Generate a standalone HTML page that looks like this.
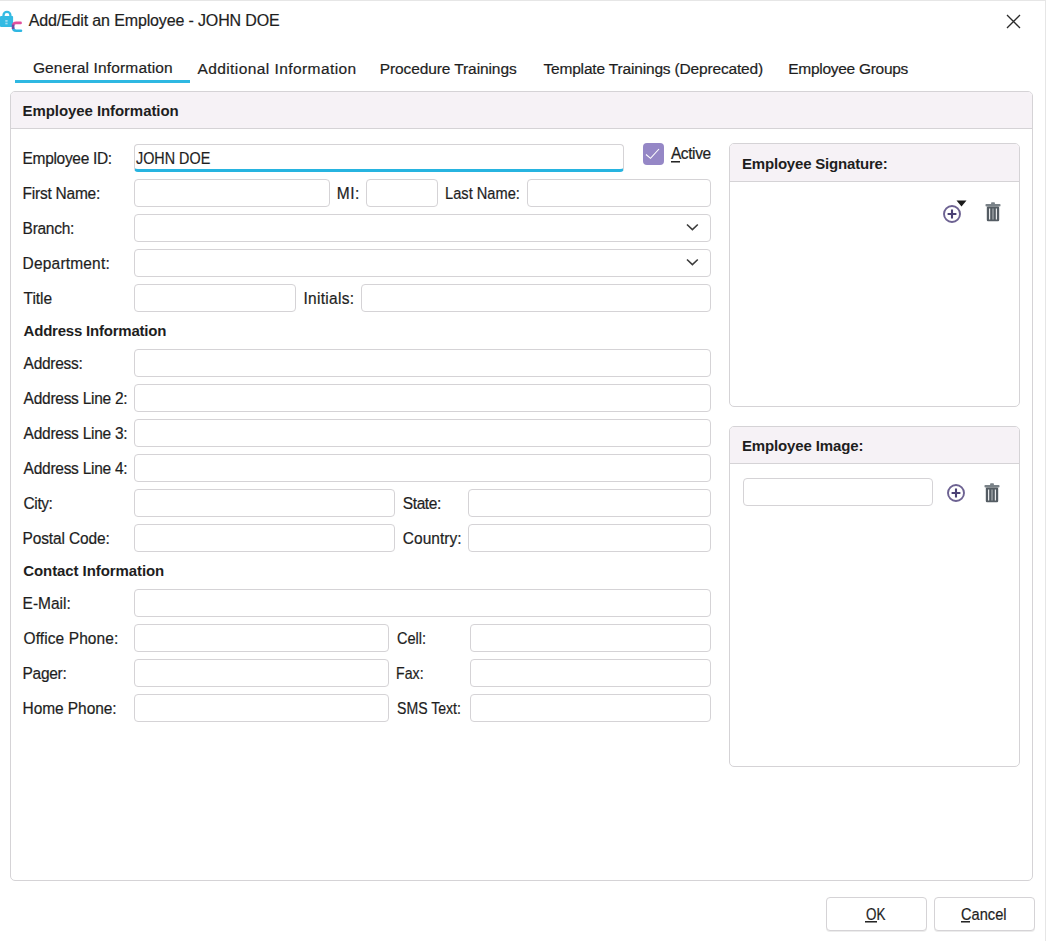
<!DOCTYPE html><html><head><meta charset="utf-8"><style>
html,body{margin:0;padding:0;background:#fff;}
body{width:1046px;height:941px;position:relative;overflow:hidden;font-family:"Liberation Sans",sans-serif;}
.t{position:absolute;white-space:pre;line-height:20px;height:20px;}
.b{position:absolute;box-sizing:border-box;border:1px solid #d5d3d6;border-radius:4px;background:#fff;}
.g{position:absolute;box-sizing:border-box;border:1px solid #d5d3d6;border-radius:5px;background:#fff;overflow:hidden;}
.gh{position:absolute;left:0;top:0;right:0;background:#f6f2f6;border-bottom:1px solid #d5d3d6;}
</style></head><body>
<div style="position:absolute;left:0;top:0;width:1046px;height:1px;background:#e6e6e6"></div>
<div style="position:absolute;left:1045px;top:0;width:1px;height:941px;background:#e6e6e6"></div>
<div class="g" style="left:10px;top:91px;width:1023px;height:790px"><div class="gh" style="height:36px"></div></div>
<div class="g" style="left:729px;top:143px;width:291px;height:264px"><div class="gh" style="height:37px"></div></div>
<div class="g" style="left:729px;top:426px;width:291px;height:341px"><div class="gh" style="height:36px"></div></div>
<div style="position:absolute;left:15px;top:80px;width:175px;height:3px;background:#2fb8e2"></div>
<div class="b" style="left:134px;top:144px;width:490px;height:28px;border-bottom:3px solid #27b4e0"></div>
<div class="b" style="left:134px;top:179px;width:196px;height:28px"></div>
<div class="b" style="left:366px;top:179px;width:72px;height:28px"></div>
<div class="b" style="left:527px;top:179px;width:184px;height:28px"></div>
<div class="b" style="left:134px;top:214px;width:577px;height:28px"></div>
<div class="b" style="left:134px;top:249px;width:577px;height:28px"></div>
<div class="b" style="left:134px;top:284px;width:162px;height:28px"></div>
<div class="b" style="left:361px;top:284px;width:350px;height:28px"></div>
<div class="b" style="left:134px;top:349px;width:577px;height:28px"></div>
<div class="b" style="left:134px;top:384px;width:577px;height:28px"></div>
<div class="b" style="left:134px;top:419px;width:577px;height:28px"></div>
<div class="b" style="left:134px;top:454px;width:577px;height:28px"></div>
<div class="b" style="left:134px;top:489px;width:261px;height:28px"></div>
<div class="b" style="left:468px;top:489px;width:243px;height:28px"></div>
<div class="b" style="left:134px;top:524px;width:261px;height:28px"></div>
<div class="b" style="left:468px;top:524px;width:243px;height:28px"></div>
<div class="b" style="left:134px;top:589px;width:577px;height:28px"></div>
<div class="b" style="left:134px;top:624px;width:255px;height:28px"></div>
<div class="b" style="left:470px;top:624px;width:241px;height:28px"></div>
<div class="b" style="left:134px;top:659px;width:255px;height:28px"></div>
<div class="b" style="left:470px;top:659px;width:241px;height:28px"></div>
<div class="b" style="left:134px;top:694px;width:255px;height:28px"></div>
<div class="b" style="left:470px;top:694px;width:241px;height:28px"></div>
<div class="b" style="left:743px;top:478px;width:190px;height:28px"></div>
<div class="b" style="left:826px;top:897px;width:101px;height:34px;border-radius:4px;box-shadow:0 1px 0 #ececec"></div>
<div class="b" style="left:934px;top:897px;width:101px;height:34px;border-radius:4px;box-shadow:0 1px 0 #ececec"></div>
<div style="position:absolute;left:642.5px;top:143px;width:21.5px;height:21.5px;border-radius:4px;background:#9587c6"></div>
<svg style="position:absolute;left:642px;top:143px" width="22" height="22"><path d="M4 11.5 L8.5 15.3 L17 6" fill="none" stroke="#fff" stroke-width="1.1"/></svg>
<svg style="position:absolute;left:684px;top:222px" width="16" height="10"><path d="M3 2.5 L8.4 7.6 L13.8 2.5" fill="none" stroke="#3c3c3c" stroke-width="1.6"/></svg>
<svg style="position:absolute;left:684px;top:257px" width="16" height="10"><path d="M3 2.5 L8.4 7.6 L13.8 2.5" fill="none" stroke="#3c3c3c" stroke-width="1.6"/></svg>
<svg style="position:absolute;left:1004px;top:12px" width="20" height="20"><path d="M3 3 L16 16 M16 3 L3 16" fill="none" stroke="#2b2b2b" stroke-width="1.3"/></svg>
<svg style="position:absolute;left:940.6px;top:202.6px" width="22" height="22" viewBox="0 0 22 22"><circle cx="11" cy="11" r="8.0" fill="none" stroke="#6d6292" stroke-width="1.9"/><path d="M11 6.6 V15.4 M6.6 11 H15.4" stroke="#4b4175" stroke-width="2.1"/></svg>
<svg style="position:absolute;left:956px;top:199.6px" width="11" height="7"><path d="M0.5 0.5 H10.5 L5.5 6.5 Z" fill="#1a1a1a"/></svg>
<svg style="position:absolute;left:985px;top:202px" width="16" height="20" viewBox="0 0 16 20"><rect x="0.5" y="2" width="15" height="2.6" rx="0.8" fill="#7a8288"/><rect x="6" y="0.3" width="4" height="2" rx="1" fill="#7a8288"/><rect x="1.8" y="4.6" width="12.4" height="14.6" rx="1.2" fill="#545c63"/><rect x="4" y="6.5" width="1.2" height="11" fill="#e8eaec"/><rect x="7.4" y="6.5" width="1.2" height="11" fill="#a9aeb2"/><rect x="10.8" y="6.5" width="1.2" height="11" fill="#e8eaec"/></svg>
<svg style="position:absolute;left:944.7px;top:481.8px" width="22" height="22" viewBox="0 0 22 22"><circle cx="11" cy="11" r="8.0" fill="none" stroke="#6d6292" stroke-width="1.9"/><path d="M11 6.6 V15.4 M6.6 11 H15.4" stroke="#4b4175" stroke-width="2.1"/></svg>
<svg style="position:absolute;left:984px;top:483px" width="16" height="20" viewBox="0 0 16 20"><rect x="0.5" y="2" width="15" height="2.6" rx="0.8" fill="#7a8288"/><rect x="6" y="0.3" width="4" height="2" rx="1" fill="#7a8288"/><rect x="1.8" y="4.6" width="12.4" height="14.6" rx="1.2" fill="#545c63"/><rect x="4" y="6.5" width="1.2" height="11" fill="#e8eaec"/><rect x="7.4" y="6.5" width="1.2" height="11" fill="#a9aeb2"/><rect x="10.8" y="6.5" width="1.2" height="11" fill="#e8eaec"/></svg>
<svg style="position:absolute;left:0px;top:0px" width="26" height="36" viewBox="0 0 26 36"><path d="M3.5 16.5 V15.3 A3.45 3.45 0 0 1 10.4 15.3 V16.5" fill="none" stroke="#34bbe3" stroke-width="2.3"/><rect x="0" y="15.9" width="13.1" height="11.1" rx="1" fill="#34bbe3"/><rect x="5.3" y="20" width="2.3" height="1.8" fill="#9fdcf1"/><rect x="5.3" y="22.7" width="2.3" height="1.6" fill="#9fdcf1"/><path d="M20.6 22.9 H16.2 Q13.1 22.9 13.1 25.6" fill="none" stroke="#e0509c" stroke-width="2.6" stroke-linecap="round"/><path d="M13.1 27.8 Q13.1 30.7 16.2 30.7 H21" fill="none" stroke="#2fb7e2" stroke-width="2.6" stroke-linecap="round"/><path d="M13.1 24.6 V29" fill="none" stroke="#6a4fa6" stroke-width="2.6"/></svg>
<div class="t" style="left:28.70px;top:11px;font-size:16px;font-weight:400;color:#1e1e1e;letter-spacing:-0.141px;-webkit-text-stroke:0.2px #1e1e1e;">Add/Edit an Employee - JOHN DOE</div>
<div class="t" style="left:32.90px;top:58px;font-size:15.5px;font-weight:400;color:#1e1e1e;letter-spacing:0.152px;-webkit-text-stroke:0.2px #1e1e1e;">General Information</div>
<div class="t" style="left:197.40px;top:59px;font-size:15.5px;font-weight:400;color:#1e1e1e;letter-spacing:0.424px;-webkit-text-stroke:0.2px #1e1e1e;">Additional Information</div>
<div class="t" style="left:379.70px;top:59px;font-size:15.5px;font-weight:400;color:#1e1e1e;letter-spacing:-0.097px;-webkit-text-stroke:0.2px #1e1e1e;">Procedure Trainings</div>
<div class="t" style="left:543.40px;top:59px;font-size:15.5px;font-weight:400;color:#1e1e1e;letter-spacing:-0.169px;-webkit-text-stroke:0.2px #1e1e1e;">Template Trainings (Deprecated)</div>
<div class="t" style="left:788.30px;top:59px;font-size:15.5px;font-weight:400;color:#1e1e1e;letter-spacing:-0.286px;-webkit-text-stroke:0.2px #1e1e1e;">Employee Groups</div>
<div class="t" style="left:22.60px;top:101px;font-size:15px;font-weight:700;color:#1e1e1e;letter-spacing:-0.077px;">Employee Information</div>
<div class="t" style="left:23.60px;top:321px;font-size:15px;font-weight:700;color:#1e1e1e;letter-spacing:-0.218px;">Address Information</div>
<div class="t" style="left:23.30px;top:561px;font-size:15px;font-weight:700;color:#1e1e1e;letter-spacing:-0.085px;">Contact Information</div>
<div class="t" style="left:742.00px;top:154px;font-size:15px;font-weight:700;color:#1e1e1e;letter-spacing:-0.195px;">Employee Signature:</div>
<div class="t" style="left:742.00px;top:436px;font-size:15px;font-weight:700;color:#1e1e1e;letter-spacing:-0.142px;">Employee Image:</div>
<div class="t" style="left:22.60px;top:148px;font-size:15.5px;font-weight:400;color:#1e1e1e;letter-spacing:-0.321px;-webkit-text-stroke:0.2px #1e1e1e;transform:scale(1.0000,1.100);transform-origin:1.00px 5px;">Employee ID:</div>
<div class="t" style="left:22.60px;top:183px;font-size:15.5px;font-weight:400;color:#1e1e1e;letter-spacing:-0.238px;-webkit-text-stroke:0.2px #1e1e1e;transform:scale(1.0000,1.100);transform-origin:1.00px 5px;">First Name:</div>
<div class="t" style="left:22.60px;top:218px;font-size:15.5px;font-weight:400;color:#1e1e1e;letter-spacing:-0.285px;-webkit-text-stroke:0.2px #1e1e1e;transform:scale(1.0000,1.100);transform-origin:1.00px 5px;">Branch:</div>
<div class="t" style="left:22.60px;top:253px;font-size:15.5px;font-weight:400;color:#1e1e1e;letter-spacing:0.182px;-webkit-text-stroke:0.2px #1e1e1e;transform:scale(1.0000,1.100);transform-origin:1.00px 5px;">Department:</div>
<div class="t" style="left:23.60px;top:288px;font-size:15.5px;font-weight:400;color:#1e1e1e;letter-spacing:-0.072px;-webkit-text-stroke:0.2px #1e1e1e;transform:scale(1.0000,1.100);transform-origin:0.00px 5px;">Title</div>
<div class="t" style="left:23.60px;top:353px;font-size:15.5px;font-weight:400;color:#1e1e1e;letter-spacing:-0.266px;-webkit-text-stroke:0.2px #1e1e1e;transform:scale(1.0000,1.100);transform-origin:0.00px 5px;">Address:</div>
<div class="t" style="left:23.60px;top:388px;font-size:15.5px;font-weight:400;color:#1e1e1e;letter-spacing:-0.264px;-webkit-text-stroke:0.2px #1e1e1e;transform:scale(1.0000,1.100);transform-origin:0.00px 5px;">Address Line 2:</div>
<div class="t" style="left:23.60px;top:423px;font-size:15.5px;font-weight:400;color:#1e1e1e;letter-spacing:-0.264px;-webkit-text-stroke:0.2px #1e1e1e;transform:scale(1.0000,1.100);transform-origin:0.00px 5px;">Address Line 3:</div>
<div class="t" style="left:23.60px;top:458px;font-size:15.5px;font-weight:400;color:#1e1e1e;letter-spacing:-0.264px;-webkit-text-stroke:0.2px #1e1e1e;transform:scale(1.0000,1.100);transform-origin:0.00px 5px;">Address Line 4:</div>
<div class="t" style="left:23.60px;top:493px;font-size:15.5px;font-weight:400;color:#1e1e1e;letter-spacing:-0.423px;-webkit-text-stroke:0.2px #1e1e1e;transform:scale(1.0000,1.100);transform-origin:0.00px 5px;">City:</div>
<div class="t" style="left:22.60px;top:528px;font-size:15.5px;font-weight:400;color:#1e1e1e;letter-spacing:-0.149px;-webkit-text-stroke:0.2px #1e1e1e;transform:scale(1.0000,1.100);transform-origin:1.00px 5px;">Postal Code:</div>
<div class="t" style="left:22.60px;top:593px;font-size:15.5px;font-weight:400;color:#1e1e1e;letter-spacing:-0.003px;-webkit-text-stroke:0.2px #1e1e1e;transform:scale(1.0000,1.100);transform-origin:1.00px 5px;">E-Mail:</div>
<div class="t" style="left:23.60px;top:628px;font-size:15.5px;font-weight:400;color:#1e1e1e;letter-spacing:0.089px;-webkit-text-stroke:0.2px #1e1e1e;transform:scale(1.0000,1.100);transform-origin:0.00px 5px;">Office Phone:</div>
<div class="t" style="left:22.60px;top:663px;font-size:15.5px;font-weight:400;color:#1e1e1e;letter-spacing:-0.312px;-webkit-text-stroke:0.2px #1e1e1e;transform:scale(1.0000,1.100);transform-origin:1.00px 5px;">Pager:</div>
<div class="t" style="left:22.60px;top:698px;font-size:15.5px;font-weight:400;color:#1e1e1e;letter-spacing:-0.077px;-webkit-text-stroke:0.2px #1e1e1e;transform:scale(1.0000,1.100);transform-origin:1.00px 5px;">Home Phone:</div>
<div class="t" style="left:336.80px;top:183px;font-size:15.5px;font-weight:400;color:#1e1e1e;letter-spacing:0.441px;-webkit-text-stroke:0.2px #1e1e1e;transform:scale(1.0000,1.100);transform-origin:1.00px 5px;">MI:</div>
<div class="t" style="left:445.00px;top:183px;font-size:15.5px;font-weight:400;color:#1e1e1e;letter-spacing:0.000px;-webkit-text-stroke:0.2px #1e1e1e;transform:scale(0.9435,1.100);transform-origin:1.00px 5px;">Last Name:</div>
<div class="t" style="left:303.40px;top:288px;font-size:15.5px;font-weight:400;color:#1e1e1e;letter-spacing:0.296px;-webkit-text-stroke:0.2px #1e1e1e;transform:scale(1.0000,1.100);transform-origin:1.00px 5px;">Initials:</div>
<div class="t" style="left:402.80px;top:493px;font-size:15.5px;font-weight:400;color:#1e1e1e;letter-spacing:-0.398px;-webkit-text-stroke:0.2px #1e1e1e;transform:scale(1.0000,1.100);transform-origin:0.00px 5px;">State:</div>
<div class="t" style="left:402.80px;top:528px;font-size:15.5px;font-weight:400;color:#1e1e1e;letter-spacing:0.032px;-webkit-text-stroke:0.2px #1e1e1e;transform:scale(1.0000,1.100);transform-origin:0.00px 5px;">Country:</div>
<div class="t" style="left:397.30px;top:628px;font-size:15.5px;font-weight:400;color:#1e1e1e;letter-spacing:0.000px;-webkit-text-stroke:0.2px #1e1e1e;transform:scale(0.9394,1.100);transform-origin:0.00px 5px;">Cell:</div>
<div class="t" style="left:396.30px;top:663px;font-size:15.5px;font-weight:400;color:#1e1e1e;letter-spacing:0.000px;-webkit-text-stroke:0.2px #1e1e1e;transform:scale(0.9124,1.100);transform-origin:1.00px 5px;">Fax:</div>
<div class="t" style="left:397.30px;top:698px;font-size:15.5px;font-weight:400;color:#1e1e1e;letter-spacing:0.000px;-webkit-text-stroke:0.2px #1e1e1e;transform:scale(0.9088,1.100);transform-origin:0.00px 5px;">SMS Text:</div>
<div class="t" style="left:136.20px;top:148px;font-size:15.5px;font-weight:400;color:#1e1e1e;letter-spacing:0.000px;-webkit-text-stroke:0.2px #1e1e1e;transform:scale(0.9266,1.100);transform-origin:0.00px 5px;">JOHN DOE</div>
<div class="t" style="left:670.90px;top:143px;font-size:15.5px;font-weight:400;color:#1e1e1e;letter-spacing:-0.398px;-webkit-text-stroke:0.2px #1e1e1e;transform:scale(1.0000,1.100);transform-origin:0.00px 5px;">Active</div>
<div class="t" style="left:865.60px;top:904px;font-size:15.5px;font-weight:400;color:#1e1e1e;letter-spacing:0.000px;-webkit-text-stroke:0.2px #1e1e1e;transform:scale(0.8674,1.100);transform-origin:0.00px 5px;">OK</div>
<div class="t" style="left:961.20px;top:904px;font-size:15.5px;font-weight:400;color:#1e1e1e;letter-spacing:0.000px;-webkit-text-stroke:0.2px #1e1e1e;transform:scale(0.9434,1.100);transform-origin:0.00px 5px;">Cancel</div>
<div style="position:absolute;left:671px;top:161px;width:9px;height:1px;background:#262626"></div>
<div style="position:absolute;left:671px;top:162px;width:9px;height:1px;background:#8a8a8a"></div>
<div style="position:absolute;left:865px;top:921px;width:12px;height:1px;background:#262626"></div>
<div style="position:absolute;left:865px;top:922px;width:12px;height:1px;background:#8a8a8a"></div>
<div style="position:absolute;left:961px;top:921px;width:9px;height:1px;background:#262626"></div>
<div style="position:absolute;left:961px;top:922px;width:9px;height:1px;background:#8a8a8a"></div>
</body></html>
